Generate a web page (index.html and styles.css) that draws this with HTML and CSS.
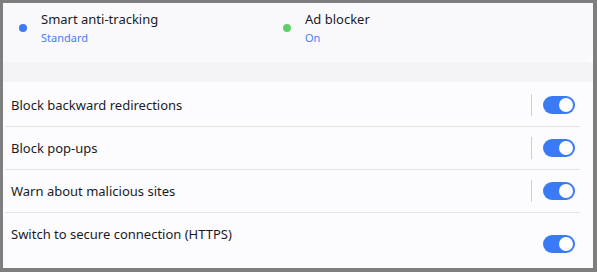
FILE: index.html
```html
<!DOCTYPE html>
<html lang="en">
<head>
<meta charset="utf-8">
<title>Protection</title>
<link rel="stylesheet" href="styles.css">
</head>
<body>
<div class="window">
  <div class="status">
    <div class="status-item">
      <span class="dot dot-blue"></span>
      <div class="status-text">
        <div class="status-title">Smart anti-tracking</div>
        <div class="status-value">Standard</div>
      </div>
    </div>
    <div class="status-item">
      <span class="dot dot-green"></span>
      <div class="status-text">
        <div class="status-title">Ad blocker</div>
        <div class="status-value">On</div>
      </div>
    </div>
  </div>
  <div class="band"></div>
  <div class="list">
    <div class="row">
      <div class="row-label">Block backward redirections</div>
      <span class="divider"></span>
      <span class="toggle"></span>
    </div>
    <div class="row">
      <div class="row-label">Block pop-ups</div>
      <span class="divider"></span>
      <span class="toggle"></span>
    </div>
    <div class="row">
      <div class="row-label">Warn about malicious sites</div>
      <span class="divider"></span>
      <span class="toggle"></span>
    </div>
    <div class="row row-tall">
      <div class="row-label">
        <div>Switch to secure connection (HTTPS)</div>
        <div class="row-desc-clip"><div class="row-desc">If a secure version of a site is available, switch to it</div></div>
      </div>
      <span class="toggle"></span>
    </div>
  </div>
</div>
</body>
</html>
```
FILE: styles.css
```css
html, body {
  margin: 0;
  padding: 0;
}
body {
  background: #7e7e7e;
  font-family: "Noto Sans", "Open Sans", sans-serif;
  color: #1b1b1f;
}
.window {
  box-sizing: border-box;
  width: 597px;
  height: 272px;
  border-style: solid;
  border-color: #7e7e7e;
  border-width: 3px 4px 4px 3px;
  background: #fcfcfe;
  overflow: hidden;
}
.status {
  height: 59px;
  box-sizing: border-box;
  padding: 7px 0 0 16px;
  display: grid;
  grid-template-columns: 264px 1fr;
  background: #f9f9fc;
  border-radius: 0 0 12px 0;
}
.status-item {
  display: flex;
  align-items: flex-start;
}
.dot {
  width: 8px;
  height: 8px;
  border-radius: 50%;
  margin-top: 14px;
  margin-right: 14px;
  flex: none;
}
.dot-blue { background: #3d7af2; }
.dot-green { background: #5fd069; }
.status-title {
  font-size: 13px;
  line-height: 18px;
}
.status-value {
  font-size: 11px;
  line-height: 16px;
  margin-top: 2px;
  color: #4a7cf0;
}
.band {
  height: 20px;
  background: #f4f4f7;
}
.list {
  padding-top: 2px;
  margin-left: 2px;
  margin-right: 13px;
}
.row {
  height: 42px;
  border-bottom: 1px solid #e3e3e7;
  display: flex;
  align-items: center;
  padding: 0 5px 0 6px;
  font-size: 13px;
}
.row-label {
  flex: 1;
}
.divider {
  width: 1px;
  height: 22px;
  background: #cfcfd3;
  margin-right: 11px;
}
.toggle {
  position: relative;
  width: 32px;
  height: 18px;
  border-radius: 9px;
  background: #3a7af5;
  flex: none;
}
.toggle::after {
  content: "";
  position: absolute;
  right: 2px;
  top: 2px;
  width: 14px;
  height: 14px;
  border-radius: 50%;
  background: #ffffff;
}
.row-tall {
  height: auto;
  align-items: flex-start;
  padding-top: 12px;
  border-bottom: none;
}
.row-tall .toggle {
  margin-top: 10px;
}
.row-desc-clip {
  height: 3px;
  overflow: hidden;
  margin-top: 6px;
}
.row-desc {
  font-size: 11px;
  line-height: 16px;
  color: #6a6a70;
}
```
